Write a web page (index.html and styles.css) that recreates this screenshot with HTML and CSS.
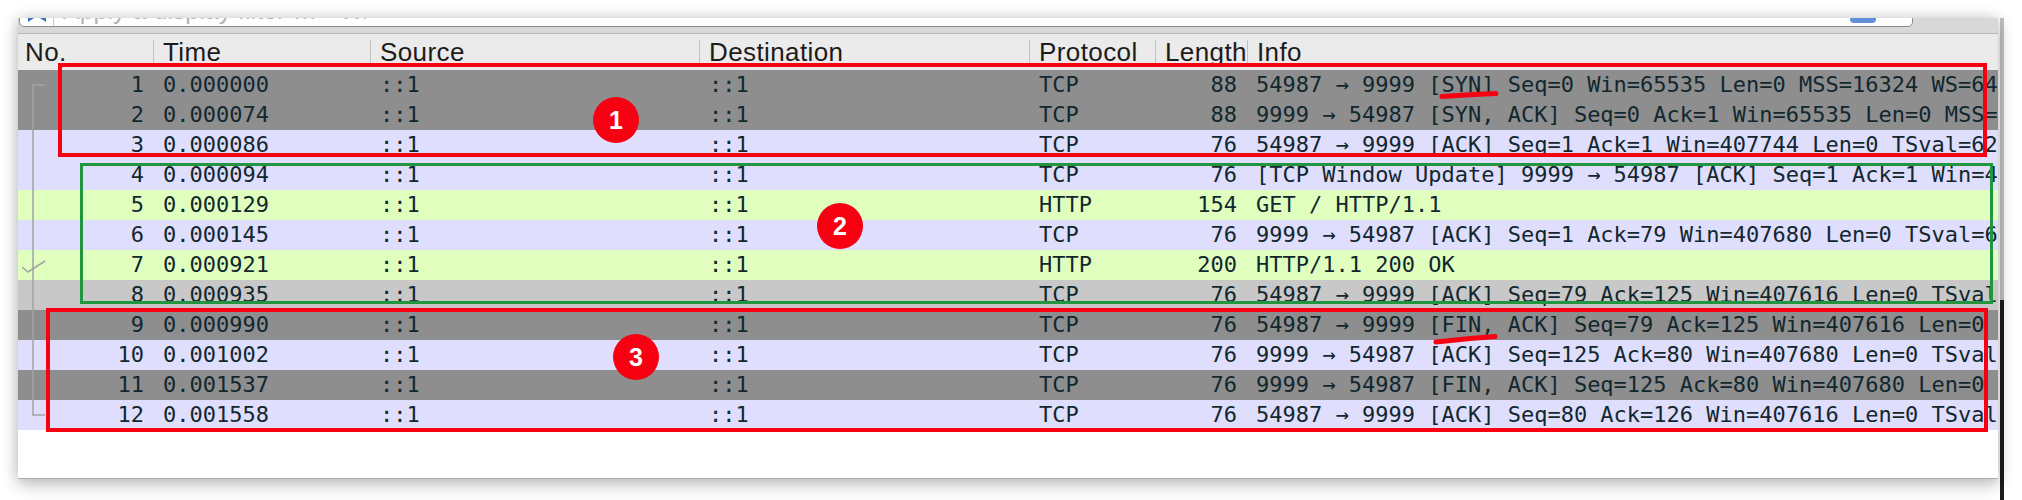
FILE: index.html
```html
<!DOCTYPE html>
<html>
<head>
<meta charset="utf-8">
<link rel="stylesheet" href="styles.css">
</head>
<body>
<div class="stage">
  <div class="window">
    <div class="filterbar">
      <div class="field">
        <div class="bookmark">
          <svg width="18" height="22" viewBox="0 0 18 22"><path d="M0 0H18V22L9 16L0 22Z" fill="#3d6fc5"/></svg>
        </div>
        <div class="placeholder">Apply a display filter … &lt;⌘/&gt;</div>
        <div class="apply"></div>
      </div>
    </div>
    <div class="header">
      <div class="hcell first">No.</div>
      <div class="hcell">Time</div>
      <div class="hcell">Source</div>
      <div class="hcell">Destination</div>
      <div class="hcell">Protocol</div>
      <div class="hcell">Length</div>
      <div class="hcell">Info</div>
    </div>
    <div class="rows">
      <div class="row gray">
        <div class="nocell"><svg class="rel" width="30" height="30"><path d="M15 30V15H27" /></svg><span>1</span></div>
        <div class="cell">0.000000</div><div class="cell">::1</div><div class="cell">::1</div><div class="cell">TCP</div><div class="cell num">88</div>
        <div class="cell info">54987 → 9999 [SYN] Seq=0 Win=65535 Len=0 MSS=16324 WS=64 TSval=627366394 TSecr=0 SACK_PERM</div>
      </div>
      <div class="row gray">
        <div class="nocell"><svg class="rel" width="30" height="30"><path d="M15 0V30" /></svg><span>2</span></div>
        <div class="cell">0.000074</div><div class="cell">::1</div><div class="cell">::1</div><div class="cell">TCP</div><div class="cell num">88</div>
        <div class="cell info">9999 → 54987 [SYN, ACK] Seq=0 Ack=1 Win=65535 Len=0 MSS=16324 WS=64 TSval=627366394</div>
      </div>
      <div class="row lav">
        <div class="nocell"><svg class="rel" width="30" height="30"><path d="M15 0V30" /></svg><span>3</span></div>
        <div class="cell">0.000086</div><div class="cell">::1</div><div class="cell">::1</div><div class="cell">TCP</div><div class="cell num">76</div>
        <div class="cell info">54987 → 9999 [ACK] Seq=1 Ack=1 Win=407744 Len=0 TSval=627366394 TSecr=627366394</div>
      </div>
      <div class="row lav">
        <div class="nocell"><svg class="rel" width="30" height="30"><path d="M15 0V30" /></svg><span>4</span></div>
        <div class="cell">0.000094</div><div class="cell">::1</div><div class="cell">::1</div><div class="cell">TCP</div><div class="cell num">76</div>
        <div class="cell info">[TCP Window Update] 9999 → 54987 [ACK] Seq=1 Ack=1 Win=407744 Len=0 TSval=627366394</div>
      </div>
      <div class="row green">
        <div class="nocell"><svg class="rel" width="30" height="30"><path d="M15 0V30" /></svg><span>5</span></div>
        <div class="cell">0.000129</div><div class="cell">::1</div><div class="cell">::1</div><div class="cell">HTTP</div><div class="cell num">154</div>
        <div class="cell info">GET / HTTP/1.1</div>
      </div>
      <div class="row lav">
        <div class="nocell"><svg class="rel" width="30" height="30"><path d="M15 0V30" /></svg><span>6</span></div>
        <div class="cell">0.000145</div><div class="cell">::1</div><div class="cell">::1</div><div class="cell">TCP</div><div class="cell num">76</div>
        <div class="cell info">9999 → 54987 [ACK] Seq=1 Ack=79 Win=407680 Len=0 TSval=627366394 TSecr=627366394</div>
      </div>
      <div class="row green">
        <div class="nocell"><svg class="rel" width="30" height="30"><path d="M15 0V30" /><path d="M4 17L10 22L27 11" /></svg><span>7</span></div>
        <div class="cell">0.000921</div><div class="cell">::1</div><div class="cell">::1</div><div class="cell">HTTP</div><div class="cell num">200</div>
        <div class="cell info">HTTP/1.1 200 OK</div>
      </div>
      <div class="row lgray">
        <div class="nocell"><svg class="rel" width="30" height="30"><path d="M15 0V30" /></svg><span>8</span></div>
        <div class="cell">0.000935</div><div class="cell">::1</div><div class="cell">::1</div><div class="cell">TCP</div><div class="cell num">76</div>
        <div class="cell info">54987 → 9999 [ACK] Seq=79 Ack=125 Win=407616 Len=0 TSval=627366395 TSecr=627366395</div>
      </div>
      <div class="row gray">
        <div class="nocell"><svg class="rel" width="30" height="30"><path d="M15 0V30" /></svg><span>9</span></div>
        <div class="cell">0.000990</div><div class="cell">::1</div><div class="cell">::1</div><div class="cell">TCP</div><div class="cell num">76</div>
        <div class="cell info">54987 → 9999 [FIN, ACK] Seq=79 Ack=125 Win=407616 Len=0 TSval=627366395</div>
      </div>
      <div class="row lav">
        <div class="nocell"><svg class="rel" width="30" height="30"><path d="M15 0V30" /></svg><span>10</span></div>
        <div class="cell">0.001002</div><div class="cell">::1</div><div class="cell">::1</div><div class="cell">TCP</div><div class="cell num">76</div>
        <div class="cell info">9999 → 54987 [ACK] Seq=125 Ack=80 Win=407680 Len=0 TSval=627366395 TSecr=627366395</div>
      </div>
      <div class="row gray">
        <div class="nocell"><svg class="rel" width="30" height="30"><path d="M15 0V30" /></svg><span>11</span></div>
        <div class="cell">0.001537</div><div class="cell">::1</div><div class="cell">::1</div><div class="cell">TCP</div><div class="cell num">76</div>
        <div class="cell info">9999 → 54987 [FIN, ACK] Seq=125 Ack=80 Win=407680 Len=0 TSval=627366396</div>
      </div>
      <div class="row lav">
        <div class="nocell"><svg class="rel" width="30" height="30"><path d="M15 0V15H27" /></svg><span>12</span></div>
        <div class="cell">0.001558</div><div class="cell">::1</div><div class="cell">::1</div><div class="cell">TCP</div><div class="cell num">76</div>
        <div class="cell info">54987 → 9999 [ACK] Seq=80 Ack=126 Win=407616 Len=0 TSval=627366396 TSecr=627366396</div>
      </div>
    </div>

    <div class="annot box1"></div>
    <div class="annot box2"></div>
    <div class="annot box3"></div>
    <div class="badge b1">1</div>
    <div class="badge b2">2</div>
    <div class="badge b3">3</div>
    <svg class="marks" width="1980" height="460" viewBox="0 0 1980 460">
      <path d="M1424 78.5 Q1452 76.5 1478 75.5" />
      <path d="M1418 324 Q1448 320.5 1477 318.5" />
    </svg>
  </div>
  <div class="edge"></div>
</div>
</body>
</html>
```

FILE: styles.css
```css
* { box-sizing: border-box; }
html, body {
  margin: 0;
  padding: 0;
  background: #ffffff;
}
body {
  width: 2022px;
  height: 500px;
  overflow: hidden;
}
.stage {
  display: flex;
  align-items: flex-start;
}
.window {
  position: relative;
  margin: 18px 0 0 18px;
  width: 1980px;
  height: 461px;
  flex: none;
  background: #ffffff;
  border-bottom: 1px solid #ababab;
  overflow: hidden;
  display: flex;
  flex-direction: column;
  box-shadow: 0 0 14px rgba(0,0,0,0.20), 0 8px 16px rgba(0,0,0,0.16);
}
.edge {
  width: 4px;
  height: 500px;
  margin-left: 2px;
  flex: none;
  background: linear-gradient(to bottom, rgba(0,0,0,0) 0, rgba(0,0,0,0) 18px, #c4c4c4 18px, #c4c4c4 300px, #1d1d1d 300px, #1d1d1d 500px);
}

/* filter toolbar */
.filterbar {
  height: 16px;
  flex: none;
  background: #d8d8d8;
  border-bottom: 1px solid #b7b7b7;
  overflow: hidden;
  display: flex;
  align-items: flex-start;
}
.field {
  flex: none;
  width: 1894px;
  height: 28px;
  margin-top: -19px;
  margin-left: 1px;
  background: #ffffff;
  border: 1px solid #8e8e8e;
  border-radius: 5px;
  display: flex;
  align-items: flex-start;
}
.bookmark {
  width: 34px;
  height: 26px;
  border-right: 1px solid #c4c4c4;
  padding-left: 8px;
  flex: none;
}
.bookmark svg { display: block; }
.placeholder {
  margin-left: 9px;
  font-family: "Liberation Sans", Arial, sans-serif;
  font-size: 25px;
  line-height: 21px;
  color: #b4b4b4;
  white-space: nowrap;
}
.apply {
  margin-left: auto;
  margin-right: 36px;
  width: 26px;
  height: 23px;
  background: #5f90d8;
  border-radius: 4px;
  flex: none;
}

/* header */
.header {
  flex: none;
  height: 36px;
  background: #ebebeb;
  display: grid;
  grid-template-columns: 135px 217px 329px 330px 126px 92px 1fr;
  font-family: "Liberation Sans", Arial, sans-serif;
  font-size: 26px;
  letter-spacing: 0.4px;
  color: #1c1c1c;
}
.hcell {
  height: 36px;
  line-height: 36px;
  padding-left: 10px;
  background: linear-gradient(#c3c3c3, #c3c3c3) left 6px / 1px 24px no-repeat;
  white-space: nowrap;
  overflow: hidden;
}
.hcell.first {
  background: none;
  padding-left: 7px;
}

/* packet rows */
.rows {
  flex: none;
  display: flex;
  flex-direction: column;
}
.row {
  height: 30px;
  display: grid;
  grid-template-columns: 135px 217px 329px 330px 126px 92px 1fr;
  font-family: "DejaVu Sans Mono", "Liberation Mono", monospace;
  font-size: 22px;
  line-height: 30px;
  color: #12272e;
  white-space: nowrap;
}
.row.gray { background: #8e8e8e; }
.row.lav { background: #dfdefd; }
.row.green { background: #e0ffbf; }
.row.lgray { background: #c8c8c8; }
.cell {
  padding-left: 10px;
  overflow: hidden;
}
.cell.num {
  text-align: right;
  padding-left: 0;
  padding-right: 10px;
}
.cell.info { padding-left: 9px; }
.nocell {
  display: flex;
  overflow: hidden;
}
.nocell span {
  flex: 1;
  text-align: right;
  padding-right: 9px;
}
.rel {
  flex: none;
  display: block;
  fill: none;
  stroke: #a2a2a2;
  stroke-width: 1.5;
}

/* annotations */
.annot {
  position: absolute;
  border-style: solid;
  pointer-events: none;
}
.box1 {
  left: 40px; top: 45px; width: 1929px; height: 94px;
  border-width: 4px; border-color: #f60012;
}
.box2 {
  left: 62px; top: 145px; width: 1913px; height: 141px;
  border-width: 3px; border-color: #21963f;
}
.box3 {
  left: 28px; top: 290px; width: 1942px; height: 124px;
  border-width: 4px; border-color: #f60012;
}
.badge {
  position: absolute;
  width: 46px;
  height: 46px;
  border-radius: 50%;
  background: #f60012;
  color: #ffffff;
  font-family: "Liberation Sans", Arial, sans-serif;
  font-weight: bold;
  font-size: 25px;
  display: flex;
  align-items: center;
  justify-content: center;
}
.b1 { left: 575px; top: 79px; }
.b2 { left: 799px; top: 185px; }
.b3 { left: 595px; top: 316px; }
.marks {
  position: absolute;
  left: 0;
  top: 0;
  pointer-events: none;
  fill: none;
  stroke: #f60012;
  stroke-width: 5;
  stroke-linecap: round;
}
```
